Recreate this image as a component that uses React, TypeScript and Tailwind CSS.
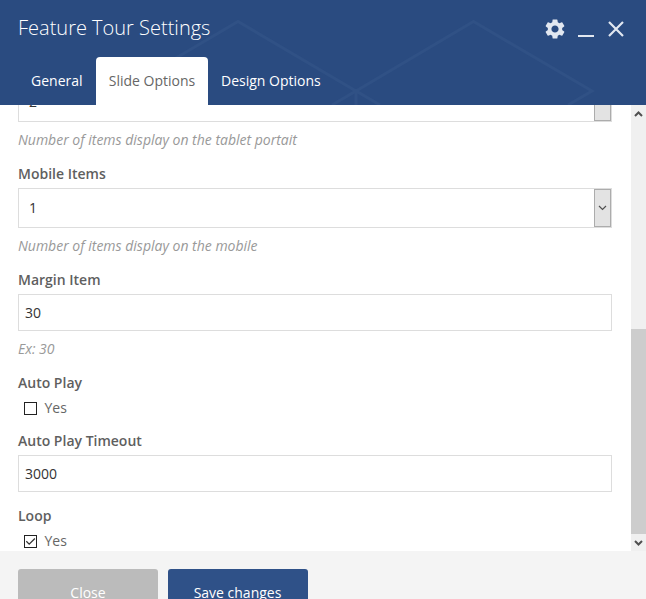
import type { ReactNode } from "react";
import { MdSettings } from "react-icons/md";

function Chevron({ up = false, className = "" }: { up?: boolean; className?: string }) {
  return (
    <svg className={className} viewBox="0 0 9 6" fill="none" stroke="currentColor">
      <path d={up ? "M1 5 4.5 1.5 8 5" : "M1 1 4.5 4.5 8 1"} />
    </svg>
  );
}

function Label({ children, className }: { children: ReactNode; className: string }) {
  return <div className={`h-[18px] font-semibold text-[#5f5f5f] ${className}`}>{children}</div>;
}

function Hint({ children }: { children: ReactNode }) {
  return <p className="mt-[9px] h-[18px] text-[#999] italic">{children}</p>;
}

function Select({ value, className }: { value: string; className: string }) {
  return (
    <div className={`flex h-10 items-center border border-[#ddd] text-[#333] ${className}`}>
      <span className="flex-1 pl-[10px]">{value}</span>
      <span className="flex h-[38px] w-[17px] items-center justify-center border border-[#acacac] bg-[#e3e3e3] pr-px">
        <Chevron className="h-[6px] w-[9px] text-[#505050] [stroke-width:1.2]" />
      </span>
    </div>
  );
}

function Input({ value }: { value: string }) {
  return (
    <div className="mt-[5px] flex h-[37px] items-center border border-[#ddd] pl-[6px] text-[#333]">{value}</div>
  );
}

function Checkbox({ checked = false }: { checked?: boolean }) {
  return (
    <div className="mt-[7px] flex h-[18px] items-center pl-[6px] text-[#666]">
      <span className="mr-[7.5px] flex h-[13px] w-[13px] items-center justify-center border border-[#222] bg-white">
        {checked && (
          <svg className="h-[11px] w-[11px]" viewBox="0 0 11 11" fill="none" stroke="#333" strokeWidth="1.3">
            <path d="M1.300 5.300 4.2 8.2 9.900 2.500" />
          </svg>
        )}
      </span>
      Yes
    </div>
  );
}

export default function App() {
  return (
    <div className="flex h-[599px] w-[646px] flex-col overflow-hidden bg-white font-['Open_Sans','Noto_Sans',sans-serif] text-[14px] leading-[18px]">
      <header className="relative flex h-[105px] shrink-0 flex-col justify-between bg-[#2a4b80]">
        <svg className="absolute inset-0 h-[105px] w-[646px]" viewBox="0 0 646 105" fill="none" stroke="#305185" strokeWidth="3">
          <path d="M120 91 238 21.5 356 91 473.500 21.500 592 91 568 105M332 105 356 91 380 105M356 91V105" />
        </svg>
        <div className="relative flex h-[57px] items-center justify-between pr-[21px] pl-[18px] text-[#e1e7f0]">
          <h1 className="mb-[2px] text-[20px] leading-[28px] font-light text-white">Feature Tour Settings</h1>
          <div className="flex h-5 items-center">
            <MdSettings className="mr-[11px] h-6 w-6" />
            <span className="mt-[15px] mr-[15px] h-[2.5px] w-4 bg-[#e1e7f0]" />
            <svg className="mt-px h-4 w-4 -translate-x-px" viewBox="0 0 16 16" fill="none" stroke="currentColor" strokeWidth="2.2">
              <path d="m1 1 14 14M15 1 1 15" />
            </svg>
          </div>
        </div>
        <nav className="relative flex h-12 pl-[18px] text-white">
          <span className="flex w-[78px] items-center pl-[13px]">General</span>
          <span className="flex w-[112px] items-center justify-center rounded-t-[4px] bg-white text-[#666]">Slide Options</span>
          <span className="flex items-center pl-[13px]">Design Options</span>
        </nav>
      </header>

      <div className="flex h-[446px] shrink-0 overflow-hidden">
        <main className="flex-1 pr-[19px] pl-[18px]">
          <Select value="2" className="-mt-[23px]" />
          <Hint>Number of items display on the tablet portait</Hint>
          <Label className="mt-4">Mobile Items</Label>
          <Select value="1" className="mt-[5px]" />
          <Hint>Number of items display on the mobile</Hint>
          <Label className="mt-4">Margin Item</Label>
          <Input value="30" />
          <Hint>Ex: 30</Hint>
          <Label className="mt-4">Auto Play</Label>
          <Checkbox />
          <Label className="mt-[15px]">Auto Play Timeout</Label>
          <Input value="3000" />
          <Label className="mt-[15px]">Loop</Label>
          <Checkbox checked />
        </main>
        <div className="flex w-[15px] flex-col items-center bg-[#f0f0f0] text-[#505050]">
          <div className="flex h-[17px] items-center">
            <Chevron up className="h-[6px] w-[9px] [stroke-width:2]" />
          </div>
          <div className="mt-[207px] h-[205px] w-full bg-[#cdcdcd]" />
          <div className="flex h-[17px] items-center">
            <Chevron className="h-[6px] w-[9px] [stroke-width:2]" />
          </div>
        </div>
      </div>

      <footer className="flex flex-1 gap-[10px] bg-[#f4f4f4] pt-[18px] pl-[18px] text-white">
        <button className="h-12 w-[140px] shrink-0 rounded-[3px] bg-[#bbb]">Close</button>
        <button className="h-12 w-[140px] shrink-0 rounded-[3px] bg-[#2f5188] pr-px">Save changes</button>
      </footer>
    </div>
  );
}
